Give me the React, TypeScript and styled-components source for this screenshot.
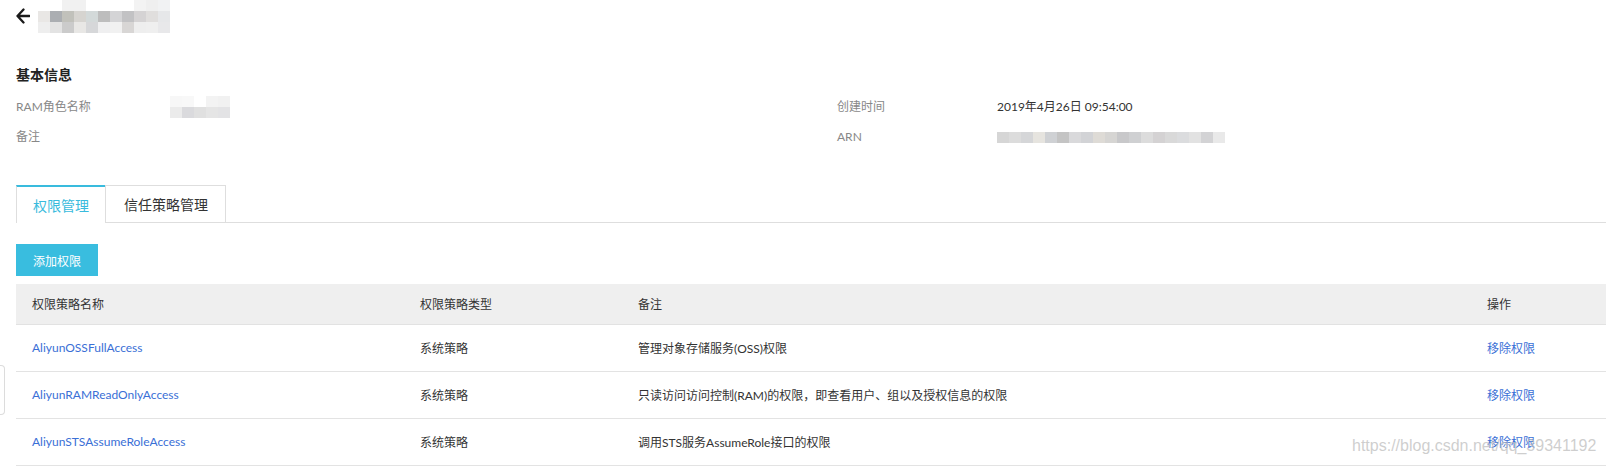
import styled, { createGlobalStyle } from 'styled-components';

const GlobalStyle = createGlobalStyle`
  html, body {
    margin: 0;
    padding: 0;
    background: #fff;
  }
  body {
    font-family: Lato, 'Noto Sans CJK SC', sans-serif;
    color: #333;
    font-size: 12px;
  }
  * {
    box-sizing: border-box;
  }
`;

// blurred (mosaic) parts of the screenshot
const titleMosaic = [
  ['transparent', 'transparent', '#f1f1f1', '#f1f1f1', 'transparent', 'transparent', 'transparent', 'transparent', '#f3f3f3', '#efefef', '#f1f2f3'],
  ['#e9e7e5', '#abaeb2', '#c1c1bb', '#d6d4d0', '#d3d9d9', '#bdbdbd', '#d4d4d6', '#c2c2c4', '#d5d3d4', '#e0dedd', '#e6e7e9'],
  ['#eeeeee', '#e3e3e3', '#cbcbcb', '#e8e7e5', '#d6d7d9', '#efeff0', '#f1f1f1', '#d8d6d5', '#eeeeee', '#efefef', '#e8e8ea'],
];

const nameMosaic = [
  ['#f7f7f7', '#f8f8f8', '#ffffff', '#f3f3f3', '#f1f1f1'],
  ['#ebebeb', '#dadadd', '#e0e0e0', '#e5e5e5', '#e3e3e5'],
];

const arnMosaic = [
  [
    '#d6d6d6', '#dcdcdc', '#d5d6d8', '#e6e4df', '#cfd1d4', '#c4c4c4', '#d9d9db', '#d2d3d6',
    '#dedbd6', '#d6d5d3', '#c8c8ca', '#cfd0d2', '#dcdcdc', '#d4d2d3', '#d9d9d9', '#dbdcde',
    '#e2e2e2', '#d3d3d5', '#e9e9e9',
  ],
];

const policies = [
  { name: 'AliyunOSSFullAccess', type: '系统策略', note: '管理对象存储服务(OSS)权限' },
  { name: 'AliyunRAMReadOnlyAccess', type: '系统策略', note: '只读访问访问控制(RAM)的权限，即查看用户、组以及授权信息的权限' },
  { name: 'AliyunSTSAssumeRoleAccess', type: '系统策略', note: '调用STS服务AssumeRole接口的权限' },
];

const Mosaic = ({ cells, size }: { cells: string[][]; size: number }) => (
  <MosaicGrid $cols={cells[0].length} $size={size}>
    {cells.flat().map((c, i) => (
      <MosaicCell key={i} style={{ background: c }} />
    ))}
  </MosaicGrid>
);

const BackArrow = () => (
  <svg width='14' height='16' viewBox='0 0 14 16' fill='none'>
    <path d='M7.5 1.5L1.5 8L7.5 14.5M1.5 8H13.5' stroke='#1a1a1a' strokeWidth='2.3' strokeLinecap='round' strokeLinejoin='round' />
  </svg>
);

export default function App() {
  return (
    <>
      <GlobalStyle />
      <Page>
        {/* Title bar */}
        <TopBar>
          <BackArrow />
          <Mosaic cells={titleMosaic} size={12} />
        </TopBar>

        {/* Basic info */}
        <SectionTitle>基本信息</SectionTitle>
        <InfoGrid>
          <Label>RAM角色名称</Label>
          <Value>
            <Mosaic cells={nameMosaic} size={12} />
          </Value>
          <Label>创建时间</Label>
          <Value>2019年4月26日 09:54:00</Value>
          <Label>备注</Label>
          <Value />
          <Label>ARN</Label>
          <Value>
            <Mosaic cells={arnMosaic} size={12} />
          </Value>
        </InfoGrid>

        {/* Tabs */}
        <TabBar>
          <Tab $active>权限管理</Tab>
          <Tab>信任策略管理</Tab>
        </TabBar>

        <PrimaryButton>添加权限</PrimaryButton>

        {/* Policy table */}
        <Table>
          <colgroup>
            <col style={{ width: 388 }} />
            <col style={{ width: 218 }} />
            <col style={{ width: 849 }} />
            <col />
          </colgroup>
          <thead>
            <tr>
              <Th>权限策略名称</Th>
              <Th>权限策略类型</Th>
              <Th>备注</Th>
              <Th>操作</Th>
            </tr>
          </thead>
          <tbody>
            {policies.map((p) => (
              <tr key={p.name}>
                <Td>
                  <Link>{p.name}</Link>
                </Td>
                <Td>{p.type}</Td>
                <Td>{p.note}</Td>
                <Td>
                  <Link>移除权限</Link>
                </Td>
              </tr>
            ))}
          </tbody>
        </Table>
      </Page>

      <SideHandle />
      <Watermark>https://blog.csdn.net/qq_39341192</Watermark>
    </>
  );
}

const Page = styled.div`
  padding-left: 16px;
  display: flex;
  flex-direction: column;
  align-items: flex-start;
`;

// ------------------------------- Header ------------------------------- //
const TopBar = styled.div`
  height: 33px;
  display: flex;
  align-items: center;
  gap: 8px;

  svg {
    margin-top: -1px;
  }
`;

const MosaicGrid = styled.div<{ $cols: number; $size: number }>`
  display: grid;
  grid-template-columns: repeat(${({ $cols }) => $cols}, ${({ $size }) => $size}px);
  grid-auto-rows: 11px;
`;

const MosaicCell = styled.div``;

// ------------------------------- Info ------------------------------- //
const SectionTitle = styled.h2`
  margin: 32px 0 0;
  font-size: 14px;
  font-weight: 700;
  line-height: 20px;
  color: #222;
`;

const InfoGrid = styled.div`
  margin-top: 12px;
  display: grid;
  grid-template-columns: 154px 667px 160px 1fr;
  grid-auto-rows: 20px;
  row-gap: 10px;
  width: 1590px;
`;

const Label = styled.div`
  color: #888;
  font-size: 12px;
  line-height: 20px;
`;

const Value = styled.div`
  color: #333;
  font-size: 12px;
  line-height: 20px;
  display: flex;
  align-items: center;
`;

// ------------------------------- Tabs ------------------------------- //
const TabBar = styled.div`
  margin-top: 38px;
  display: flex;
  width: 1590px;
  border-bottom: 1px solid #dedede;
`;

const Tab = styled.div<{ $active?: boolean }>`
  padding: 0 16px;
  display: flex;
  align-items: center;
  font-size: 14px;
  color: ${({ $active }) => ($active ? '#39bbdd' : '#333')};
  background: #fff;
  border: 1px solid #dedede;
  border-top: ${({ $active }) => ($active ? '2px solid #39bbdd' : '1px solid #dedede')};
  border-bottom: none;
  margin-bottom: ${({ $active }) => ($active ? '-1px' : '0')};
  height: ${({ $active }) => ($active ? '38px' : '37px')};

  & + & {
    margin-left: -1px;
    padding: 0 17px 0 18px;
  }
`;

const PrimaryButton = styled.button`
  margin-top: 21px;
  height: 32px;
  padding: 0 17px;
  border: none;
  background: #39bddf;
  color: #fff;
  font-family: inherit;
  font-size: 12px;
  cursor: pointer;
`;

// ------------------------------- Table ------------------------------- //
const Table = styled.table`
  margin-top: 8px;
  width: 1590px;
  table-layout: fixed;
  border-collapse: collapse;
`;

const Th = styled.th`
  height: 40px;
  padding: 0 16px;
  background: #efefef;
  border-bottom: 1px solid #e2e2e2;
  text-align: left;
  font-weight: 400;
  font-size: 12px;
  color: #333;
`;

const Td = styled.td`
  height: 47px;
  padding: 0 16px;
  border-bottom: 1px solid #e3e3e3;
  font-size: 12px;
  color: #333;
  white-space: nowrap;
`;

const Link = styled.a`
  color: #3a6fd6;
  cursor: pointer;
`;

// ------------------------------- Overlays ------------------------------- //
const SideHandle = styled.div`
  position: absolute;
  left: 0;
  top: 365px;
  width: 5px;
  height: 50px;
  border: 1px solid #dcdcdc;
  border-left: none;
  border-radius: 0 4px 4px 0;
  background: #fff;
`;

const Watermark = styled.div`
  position: absolute;
  left: 1352px;
  top: 436px;
  font-family: 'Liberation Sans', Arial, sans-serif;
  font-size: 16px;
  line-height: 20px;
  color: rgba(190, 190, 190, 0.75);
  pointer-events: none;
`;
